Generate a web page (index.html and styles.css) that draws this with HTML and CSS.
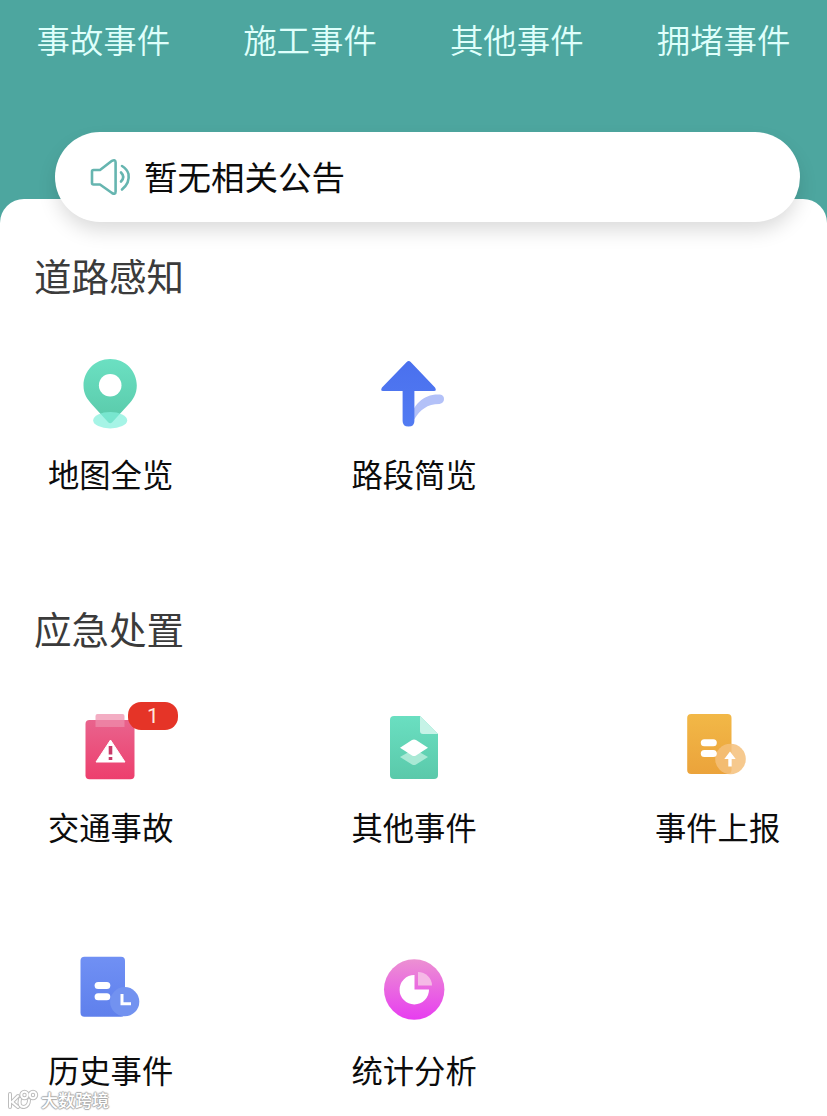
FILE: index.html
```html
<!DOCTYPE html>
<html lang="zh-CN">
	<head>
		<meta charset="UTF-8">
		<title>道路感知</title>
		<link rel="stylesheet" href="styles.css">
	</head>
	<body>
		<div class="page">
			<div class="header">
				<ul class="tabs">
					<li>事故事件</li>
					<li>施工事件</li>
					<li>其他事件</li>
					<li>拥堵事件</li>
				</ul>
			</div>
			<div class="notice">
				<svg class="horn" viewBox="0 0 42 38" width="42" height="38">
					<path d="M3.5 12H10L22 2.8Q25.6 1 25.6 4.500V33.500Q25.600 37 22 35L10 26.500H3.500Q2 26.500 2 25V13.500Q2 12 3.500 12Z"/>
					<path d="M31 14.500Q35.500 19 31 23.500M32 8Q37 11 38.500 16Q40 25 32 31.500"/>
				</svg>
				<span>暂无相关公告</span>
			</div>
			<div class="sheet">
				<div class="section">
					<h2>道路感知</h2>
					<ul class="menu">
						<li>
							<svg viewBox="0 0 80 80" width="80" height="80">
								<defs><linearGradient id="gPin" x1="0" y1="0" x2="0" y2="1"><stop offset="0" stop-color="#6be0c2"/><stop offset="1" stop-color="#59c9a9"/></linearGradient></defs>
								<path fill="url(#gPin)" d="M40.200 6C55.500 6 66.800 18 66.800 32.500C66.800 41 63 47 58 52L42 69.500Q40.200 71 38.400 69.500L22.400 52C17 46 13.500 41 13.500 32.500C13.500 18 25 6 40.200 6Z"/>
								<circle cx="40.200" cy="32.300" r="11.300" fill="#fff"/>
								<ellipse cx="40.200" cy="67.300" rx="17" ry="8.200" fill="#83f0dc" fill-opacity=".72"/>
							</svg>
							<p>地图全览</p>
						</li>
						<li>
							<svg viewBox="0 0 80 80" width="80" height="80">
								<defs><linearGradient id="gArrow" x1="0" y1="0" x2="0" y2="1"><stop offset="0" stop-color="#4a70ee"/><stop offset="1" stop-color="#527bf2"/></linearGradient></defs>
								<path fill="#b3c1f8" d="M36 69C38 52 49 41.500 64 41.500H66Q70 42 70 46T65.500 51C53 51 46 57 40.500 66Z"/>
								<path fill="url(#gArrow)" d="M32.700 9Q34.700 7 36.700 9L61 34.500Q63 38 60 38H40.400V68Q40.400 73.500 34.500 73.500T28.600 68V38H9Q6 38 8 34.500Z"/>
							</svg>
							<p>路段简览</p>
						</li>
					</ul>
				</div>
				<div class="section">
					<h2>应急处置</h2>
					<ul class="menu">
						<li>
							<svg viewBox="0 0 80 80" width="80" height="80">
								<defs><linearGradient id="gAlarm" x1="0" y1="0" x2="0" y2="1"><stop offset="0" stop-color="#e9638d"/><stop offset="1" stop-color="#ed3f6d"/></linearGradient></defs>
								<rect x="15.500" y="14" width="49" height="59.300" rx="4" fill="url(#gAlarm)"/>
								<path fill="#ee8dac" fill-opacity=".72" d="M25.500 10Q25.500 8 27.500 8H52.500Q54.500 8 54.500 10V21H25.500Z"/>
								<path fill="#fff" stroke="#fff" stroke-linejoin="round" d="M40.500 34L55 56H26Z"/>
								<path stroke="#c73a68" stroke-width="3.600" d="M40.500 40V48.500M40.500 51V54"/>
							</svg>
							<em class="badge">1</em>
							<p>交通事故</p>
						</li>
						<li>
							<svg viewBox="0 0 80 80" width="80" height="80">
								<defs><linearGradient id="gDoc" x1="0" y1="0" x2="0" y2="1"><stop offset="0" stop-color="#6adfc1"/><stop offset="1" stop-color="#5ac9aa"/></linearGradient></defs>
								<path fill="url(#gDoc)" d="M20 10H46L64 28V69Q64 73 60 73H20Q16 73 16 69V14Q16 10 20 10Z"/>
								<path fill="#c6f3e7" d="M46 10L64 28H49Q46 28 46 25Z"/>
								<path fill="#a9e9d5" d="M26 51L40 43L54 51L42 58.500Q40 59.500 38 58.500Z"/>
								<path fill="#fff" d="M26 41.700L38 34Q40 33 42 34L54 41.700L42 49.500Q40 50.500 38 49.500Z"/>
							</svg>
							<p>其他事件</p>
						</li>
						<li>
							<svg viewBox="0 0 80 80" width="80" height="80">
								<defs><linearGradient id="gUp" x1="0" y1="0" x2="0" y2="1"><stop offset="0" stop-color="#f2b847"/><stop offset="1" stop-color="#eba33b"/></linearGradient></defs>
								<rect x="10.200" y="8" width="44.300" height="60" rx="4" fill="url(#gUp)"/>
								<circle cx="53.500" cy="53" r="15.300" fill="#f5c07a" fill-opacity=".85"/>
								<rect x="23.800" y="33.300" width="16" height="7" rx="3.500" fill="#fff"/>
								<rect x="23.800" y="44" width="16" height="7" rx="3.500" fill="#fff"/>
								<path fill="#fff" d="M53 45.500L58.700 53H54.700V60.500H51.300V53H47.300Z"/>
							</svg>
							<p>事件上报</p>
						</li>
						<li>
							<svg viewBox="0 0 80 80" width="80" height="80">
								<defs><linearGradient id="gHis" x1="0" y1="0" x2="0" y2="1"><stop offset="0" stop-color="#7090f4"/><stop offset="1" stop-color="#5f80ec"/></linearGradient></defs>
								<rect x="10.500" y="7.700" width="44.500" height="60" rx="4" fill="url(#gHis)"/>
								<circle cx="54.700" cy="52.700" r="14.600" fill="#7292f0"/>
								<rect x="24.600" y="33" width="15.700" height="7" rx="3.500" fill="#fff"/>
								<rect x="24.600" y="44.300" width="15.700" height="7" rx="3.500" fill="#fff"/>
								<path fill="none" stroke="#fff" stroke-width="3" d="M52 45V54.700H61"/>
							</svg>
							<p>历史事件</p>
						</li>
						<li>
							<svg viewBox="0 0 80 80" width="80" height="80">
								<defs><linearGradient id="gPie" x1="0" y1="0" x2="0" y2="1"><stop offset="0" stop-color="#ec91d2"/><stop offset="1" stop-color="#e73df0"/></linearGradient></defs>
								<circle cx="40.200" cy="40.500" r="30.200" fill="url(#gPie)"/>
								<path fill="#fff" d="M40.500 26V40.500H55A14.700 14.700 0 1 1 40.500 26Z"/>
								<path fill="#f5b9e6" d="M44 23A14 13.500 0 0 1 58 36.500H44Z"/>
							</svg>
							<p>统计分析</p>
						</li>
					</ul>
				</div>
			</div>
			<div class="watermark">
				<svg viewBox="0 0 32 22" width="32" height="22">
					<g id="mark">
						<path d="M3 5V18M11 7L5 13L11 18"/>
						<path d="M13 10Q11 18 17 18Q22 17 22 11"/>
						<circle cx="17.500" cy="6" r="3.200"/>
						<circle cx="26" cy="6" r="3.200"/>
					</g>
					<use href="#mark" class="inner"/>
				</svg>
				<span>大数跨境</span>
			</div>
		</div>
	</body>
</html>
```
FILE: styles.css
```css
* {margin:0; padding:0; box-sizing:border-box;}
li{list-style:none;}
body{font-family:"Noto Sans CJK SC",sans-serif; background:#fff; color:#0c0c0c;}
.page{width:827px; height:1116px; position:relative; overflow:hidden; background:#fff;}
.header{height:244px; padding-top:14px; background:#4da69f;}
.tabs{display:flex;}
.tabs li{flex:1; text-align:center; font-size:33.5px; line-height:50px; color:#dffffb; font-weight:350;}

/* notice bar lies over the header and the sheet */
.notice{position:relative; z-index:2; display:flex; align-items:center; width:745px; height:90px; margin:-112px 0 0 55px; padding-left:35px; border-radius:45px; background:#fff; box-shadow:0 10px 20px -2px rgba(0,0,0,.15);}
.notice span{margin:-3px 0 0 12px; font-size:33.5px; line-height:50px;}
.horn{fill:none; stroke:#66b5b0; stroke-width:2.6; stroke-linecap:round; stroke-linejoin:round;}

.sheet{position:relative; height:917px; margin-top:-23px; padding-top:48px; border-radius:24px 24px 0 0; background:#fff;}
.section{height:353px;}
.section h2{padding-left:34px; font-size:37.5px; line-height:56px; font-weight:400; color:#3b3b3b;}
.menu{display:grid; grid-template-columns:repeat(3,126px); column-gap:177.5px; row-gap:97px; padding:50px 0 0 47px;}
.menu li{position:relative; height:146px; text-align:center;}
.menu svg{display:block; margin:0 auto;}
.menu p{margin-top:17px; padding-left:1px; font-size:31.3px; line-height:48px; white-space:nowrap;}
.badge{position:absolute; left:81px; top:-4px; width:50px; height:28px; border-radius:13px; background:#e53427; color:#ffe9df; font:normal 21px/28px Roboto,sans-serif; text-align:center;}

.watermark{position:absolute; left:7px; bottom:4px; display:flex; align-items:center; height:24px;}
.watermark svg{fill:none; stroke:#bdbdbd; stroke-width:4; stroke-linecap:round;}
.watermark .inner{stroke:#fff; stroke-width:2;}
.watermark span{margin-left:2px; font-size:17px; line-height:20px; font-weight:500; color:#fff; text-shadow:1px 0 1px #aaa,-1px 0 1px #aaa,0 1px 1px #aaa,0 -1px 1px #aaa;}
```
